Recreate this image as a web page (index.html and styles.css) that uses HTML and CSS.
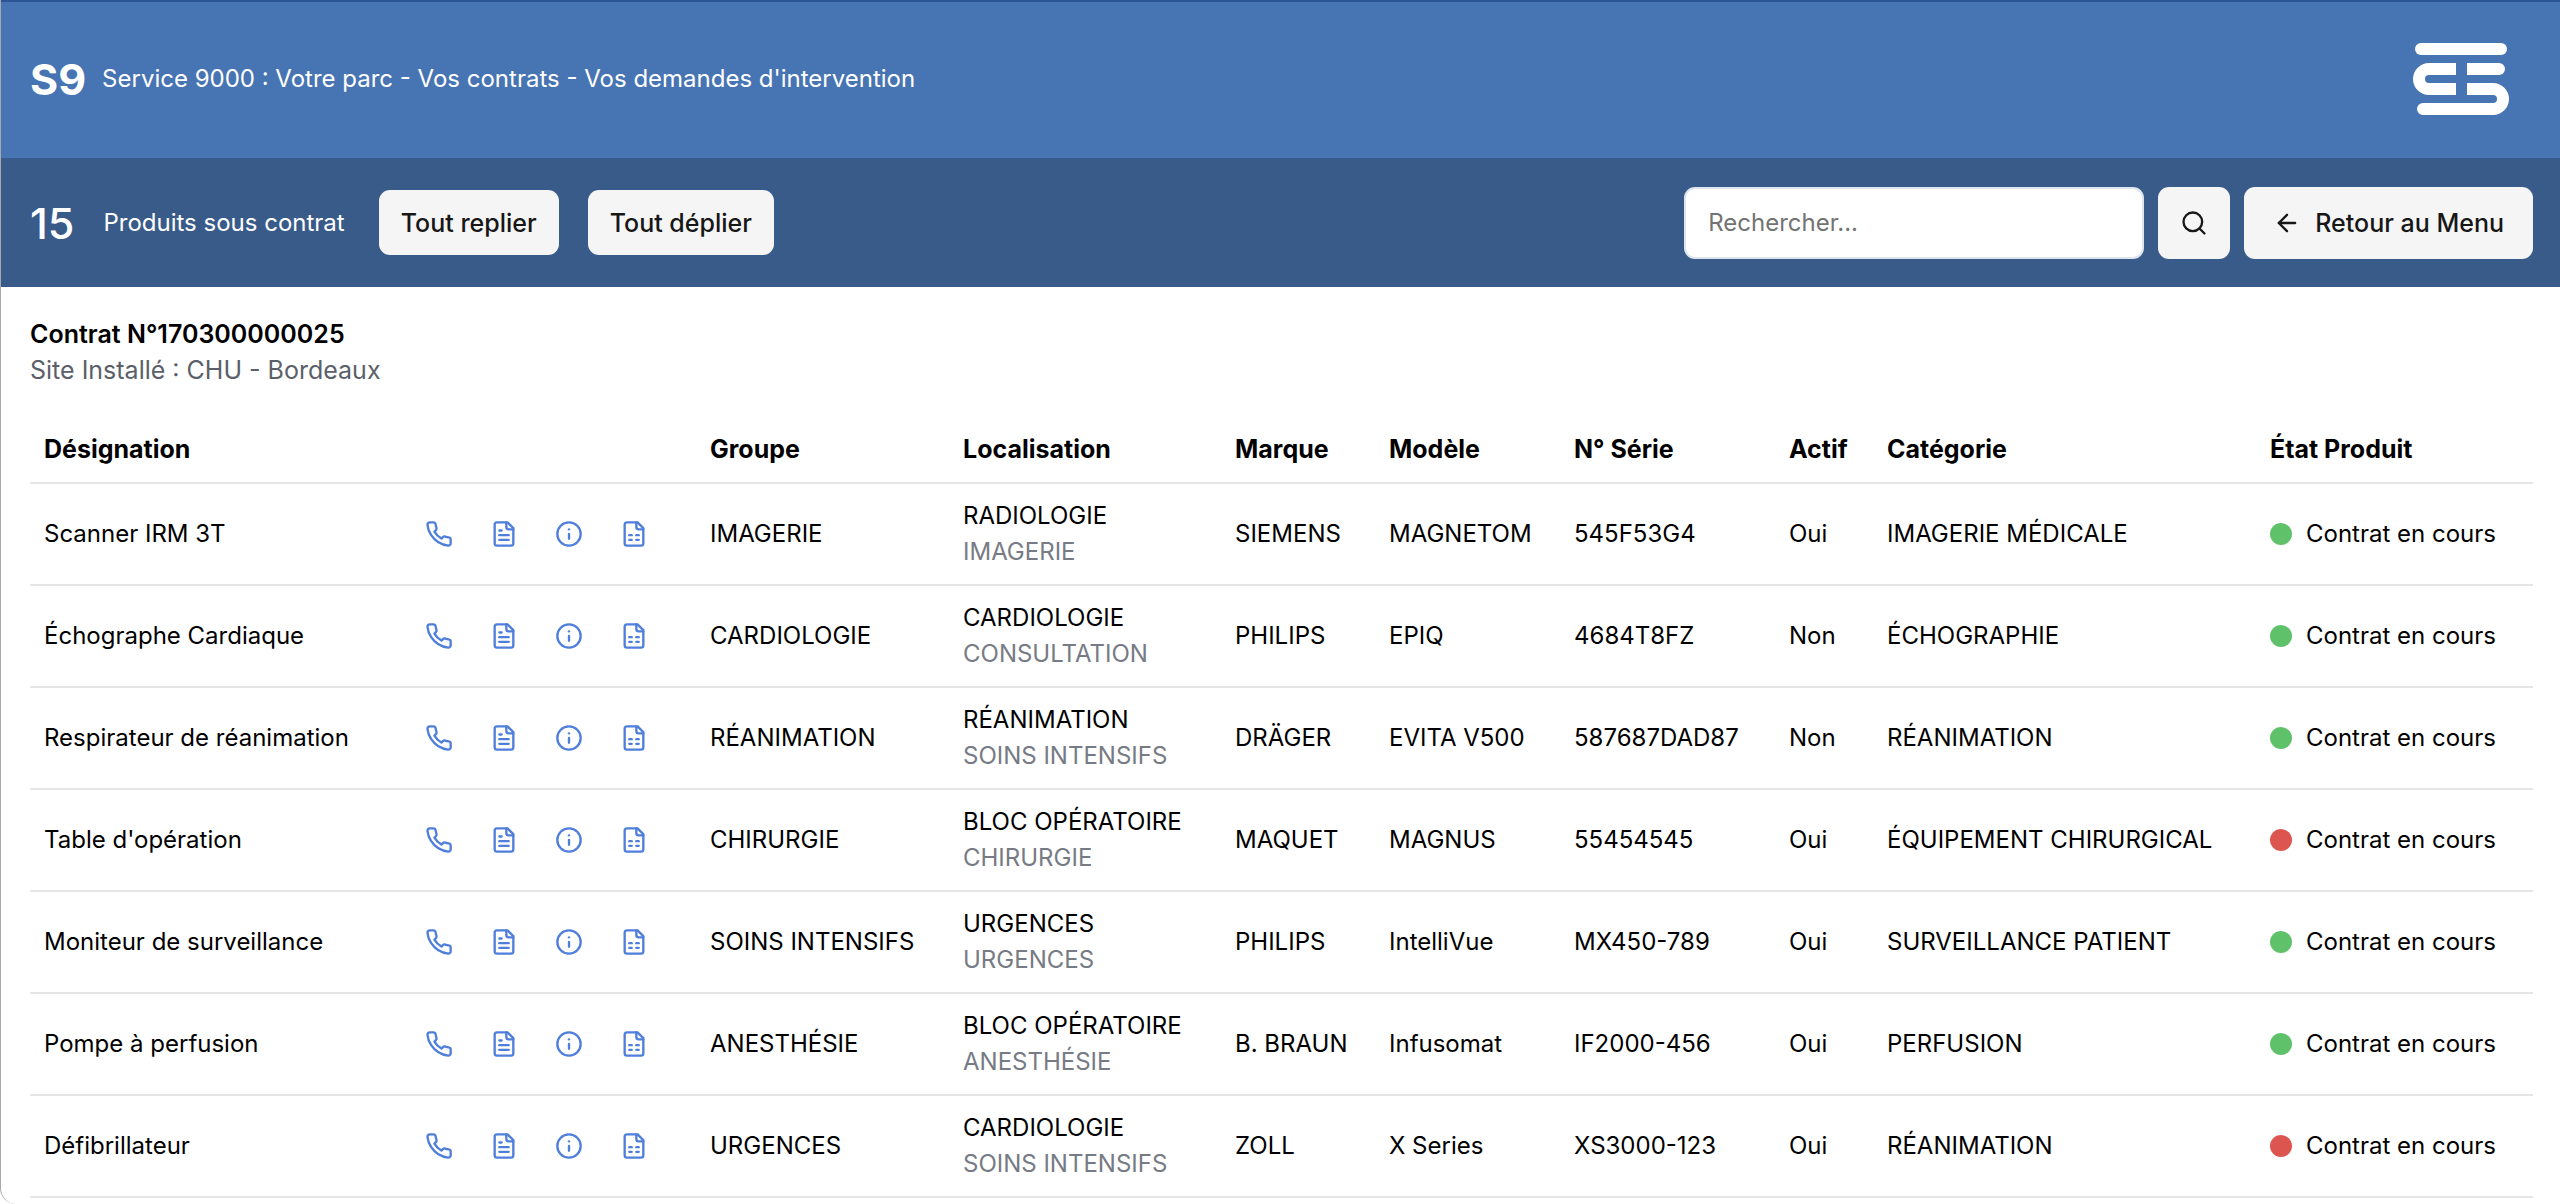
FILE: index.html
```html
<!DOCTYPE html>
<html lang="fr">
<head>
<meta charset="utf-8">
<title>Service 9000 - Produits sous contrat</title>
<link rel="stylesheet" href="styles.css">
</head>
<body>
<svg class="sprite" aria-hidden="true">
  <symbol id="i-phone" viewBox="0 0 24 24"><path d="M22 16.92v3a2 2 0 0 1-2.18 2 19.79 19.79 0 0 1-8.63-3.07 19.5 19.5 0 0 1-6-6 19.79 19.79 0 0 1-3.07-8.67A2 2 0 0 1 4.11 2h3a2 2 0 0 1 2 1.72 12.84 12.84 0 0 0 .7 2.81 2 2 0 0 1-.45 2.11L8.09 9.91a16 16 0 0 0 6 6l1.27-1.27a2 2 0 0 1 2.11-.45 12.84 12.84 0 0 0 2.81.7A2 2 0 0 1 22 16.92z"/></symbol>
  <symbol id="i-text" viewBox="0 0 24 24"><path d="M15 2H6a2 2 0 0 0-2 2v16a2 2 0 0 0 2 2h12a2 2 0 0 0 2-2V7Z"/><path d="M14 2v4a2 2 0 0 0 2 2h4"/><path d="M10 9H8"/><path d="M16 13H8"/><path d="M16 17H8"/></symbol>
  <symbol id="i-info" viewBox="0 0 24 24"><circle cx="12" cy="12" r="10"/><path d="M12 16v-4"/><path d="M12 8h.01"/></symbol>
  <symbol id="i-sheet" viewBox="0 0 24 24"><path d="M15 2H6a2 2 0 0 0-2 2v16a2 2 0 0 0 2 2h12a2 2 0 0 0 2-2V7Z"/><path d="M14 2v4a2 2 0 0 0 2 2h4"/><path d="M8 13h2"/><path d="M14 13h2"/><path d="M8 17h2"/><path d="M14 17h2"/></symbol>
</svg>
<div class="page">
  <header class="header">
    <div class="brand"><h1 class="brand-mark">S9</h1><p>Service 9000 : Votre parc - Vos contrats - Vos demandes d'intervention</p></div>
    <svg class="logo" viewBox="0 0 96 72" role="img" aria-label="Logo">
      <rect x="2" y="0" width="92" height="12" rx="6"/>
      <path d="M43 20H16a16 16 0 0 0 0 32H43V40H16a4 4 0 0 1 0-8H43Z"/>
      <path d="M54 20H86a6 6 0 0 1 0 12H54Z"/>
      <path d="M54 40H80a16 16 0 0 1 0 32H10a6 6 0 0 1 0-12H80a4 4 0 0 0 0-8H54Z"/>
    </svg>
  </header>
  <div class="toolbar">
    <div class="summary"><span class="count">15</span><span>Produits sous contrat</span></div>
    <div class="folds"><button class="btn" type="button">Tout replier</button><button class="btn" type="button">Tout déplier</button></div>
    <form class="search">
      <input class="field" type="search" placeholder="Rechercher..." aria-label="Rechercher">
      <button class="btn tall square" type="button" aria-label="Lancer la recherche"><svg class="icon" viewBox="0 0 24 24"><circle cx="11" cy="11" r="8"/><path d="m21 21-4.3-4.3"/></svg></button>
      <button class="btn tall back" type="button"><svg class="icon" viewBox="0 0 24 24"><path d="m12 19-7-7 7-7"/><path d="M19 12H5"/></svg>Retour au Menu</button>
    </form>
  </div>
  <main class="content">
    <h2 class="contract">Contrat N°170300000025</h2>
    <p class="site">Site Installé : CHU - Bordeaux</p>
    <table class="products">
      <colgroup><col class="c-name"><col class="c-actions"><col class="c-group"><col class="c-place"><col class="c-brand"><col class="c-model"><col class="c-serial"><col class="c-active"><col class="c-category"><col class="c-state"></colgroup>
      <thead><tr><th>Désignation</th><td></td><th>Groupe</th><th>Localisation</th><th>Marque</th><th>Modèle</th><th>N° Série</th><th>Actif</th><th>Catégorie</th><th>État Produit</th></tr></thead>
      <tbody id="rows"></tbody>
    </table>
  </main>
</div>
<script src="app.js"></script>
</body>
</html>
```
FILE: styles.css
```css
* { box-sizing: border-box; }
body {
  margin: 0;
  background: #fff;
  color: #000;
  font-family: Inter, "Liberation Sans", sans-serif;
  font-size: 24px;
  line-height: 36px;
}
h1, h2, p { margin: 0; }
button, input { font: inherit; }
.sprite { display: none; }
.page {
  min-height: 100vh;
  border-left: 1px solid #a9a9ab;
  border-bottom-left-radius: 16px;
}

.header {
  display: flex;
  align-items: center;
  justify-content: space-between;
  height: 158px;
  padding: 0 51px 0 29px;
  background: #4774b3;
  box-shadow: inset 0 2px #2b5592;
  color: #fff;
}
.brand { display: flex; align-items: center; gap: 16px; }
.brand-mark { font-size: 43px; font-weight: 700; }
.logo { width: 96px; height: 72px; fill: #fff; }

.toolbar {
  display: flex;
  align-items: center;
  gap: 34px;
  height: 129px;
  padding: 0 27px 0 29px;
  background: #395b89;
  color: #fff;
}
.summary { display: flex; align-items: center; gap: 29px; }
.count { font-size: 43px; font-weight: 500; }
.folds { display: flex; gap: 29px; }
.btn {
  display: flex;
  align-items: center;
  justify-content: center;
  gap: 14px;
  height: 65px;
  padding: 0 22px;
  border: 0;
  border-radius: 11px;
  background: #f5f5f5;
  color: #171717;
  font-size: 25px;
  font-weight: 500;
  white-space: nowrap;
}
.btn.tall { height: 72px; }
.btn.square { width: 72px; padding: 0; }
.btn.back { padding: 0 29px; }
.search { display: flex; gap: 14px; margin-left: auto; }
.field {
  width: 460px;
  height: 72px;
  padding: 0 22px;
  border: 2px solid #dfe5ee;
  border-radius: 11px;
  background: #fff;
  color: #0a0a0a;
}
.field::placeholder { color: #737373; opacity: 1; }
.icon {
  flex: none;
  width: 28px;
  height: 28px;
  fill: none;
  stroke: currentColor;
  stroke-width: 2;
  stroke-linecap: round;
  stroke-linejoin: round;
}

.content { padding: 29px 27px 0 29px; }
.contract { font-size: 25px; font-weight: 600; }
.site { color: #5b5f69; font-size: 25px; }
.products {
  width: 100%;
  margin-top: 27px;
  border-collapse: collapse;
  table-layout: fixed;
  white-space: nowrap;
}
.products th, .products td {
  padding: 0 14px;
  border-bottom: 2px solid #e5e5e5;
  text-align: left;
}
.products th { height: 68px; font-size: 25px; font-weight: 700; }
.products tbody td { height: 102px; }
.c-name { width: 381px; }
.c-actions { width: 285px; }
.c-group { width: 253px; }
.c-place { width: 272px; }
.c-brand { width: 154px; }
.c-model { width: 185px; }
.c-serial { width: 215px; }
.c-active { width: 98px; }
.c-category { width: 383px; }
.c-state { width: 277px; }
.actions { display: flex; gap: 37px; }
.action { display: flex; padding: 0; border: 0; background: none; color: #4f7edb; }
.sub { display: block; color: #777b85; }
.state { display: flex; align-items: center; gap: 14px; }
.dot { width: 22px; height: 22px; border-radius: 50%; background: #5fc26a; }
.dot.off { background: #dc564f; }
```
FILE: app.js
```js
const products = [
  ["Scanner IRM 3T", "IMAGERIE", "RADIOLOGIE", "IMAGERIE", "SIEMENS", "MAGNETOM", "545F53G4", "Oui", "IMAGERIE MÉDICALE", true],
  ["Échographe Cardiaque", "CARDIOLOGIE", "CARDIOLOGIE", "CONSULTATION", "PHILIPS", "EPIQ", "4684T8FZ", "Non", "ÉCHOGRAPHIE", true],
  ["Respirateur de réanimation", "RÉANIMATION", "RÉANIMATION", "SOINS INTENSIFS", "DRÄGER", "EVITA V500", "587687DAD87", "Non", "RÉANIMATION", true],
  ["Table d'opération", "CHIRURGIE", "BLOC OPÉRATOIRE", "CHIRURGIE", "MAQUET", "MAGNUS", "55454545", "Oui", "ÉQUIPEMENT CHIRURGICAL", false],
  ["Moniteur de surveillance", "SOINS INTENSIFS", "URGENCES", "URGENCES", "PHILIPS", "IntelliVue", "MX450-789", "Oui", "SURVEILLANCE PATIENT", true],
  ["Pompe à perfusion", "ANESTHÉSIE", "BLOC OPÉRATOIRE", "ANESTHÉSIE", "B. BRAUN", "Infusomat", "IF2000-456", "Oui", "PERFUSION", true],
  ["Défibrillateur", "URGENCES", "CARDIOLOGIE", "SOINS INTENSIFS", "ZOLL", "X Series", "XS3000-123", "Oui", "RÉANIMATION", false]
];
const actions = [["phone", "Appeler"], ["text", "Documents"], ["info", "Informations"], ["sheet", "Fiche"]];
const buttons = actions.map(([id, label]) =>
  `<button class="action" type="button" aria-label="${label}"><svg class="icon"><use href="#i-${id}"/></svg></button>`).join("");
document.getElementById("rows").innerHTML = products.map(([name, group, place, unit, brand, model, serial, active, category, ok]) =>
  `<tr><td>${name}</td><td><div class="actions">${buttons}</div></td><td>${group}</td>
  <td>${place}<span class="sub">${unit}</span></td><td>${brand}</td><td>${model}</td><td>${serial}</td><td>${active}</td><td>${category}</td>
  <td><div class="state"><span class="dot${ok ? "" : " off"}"></span>Contrat en cours</div></td></tr>`).join("");
```
